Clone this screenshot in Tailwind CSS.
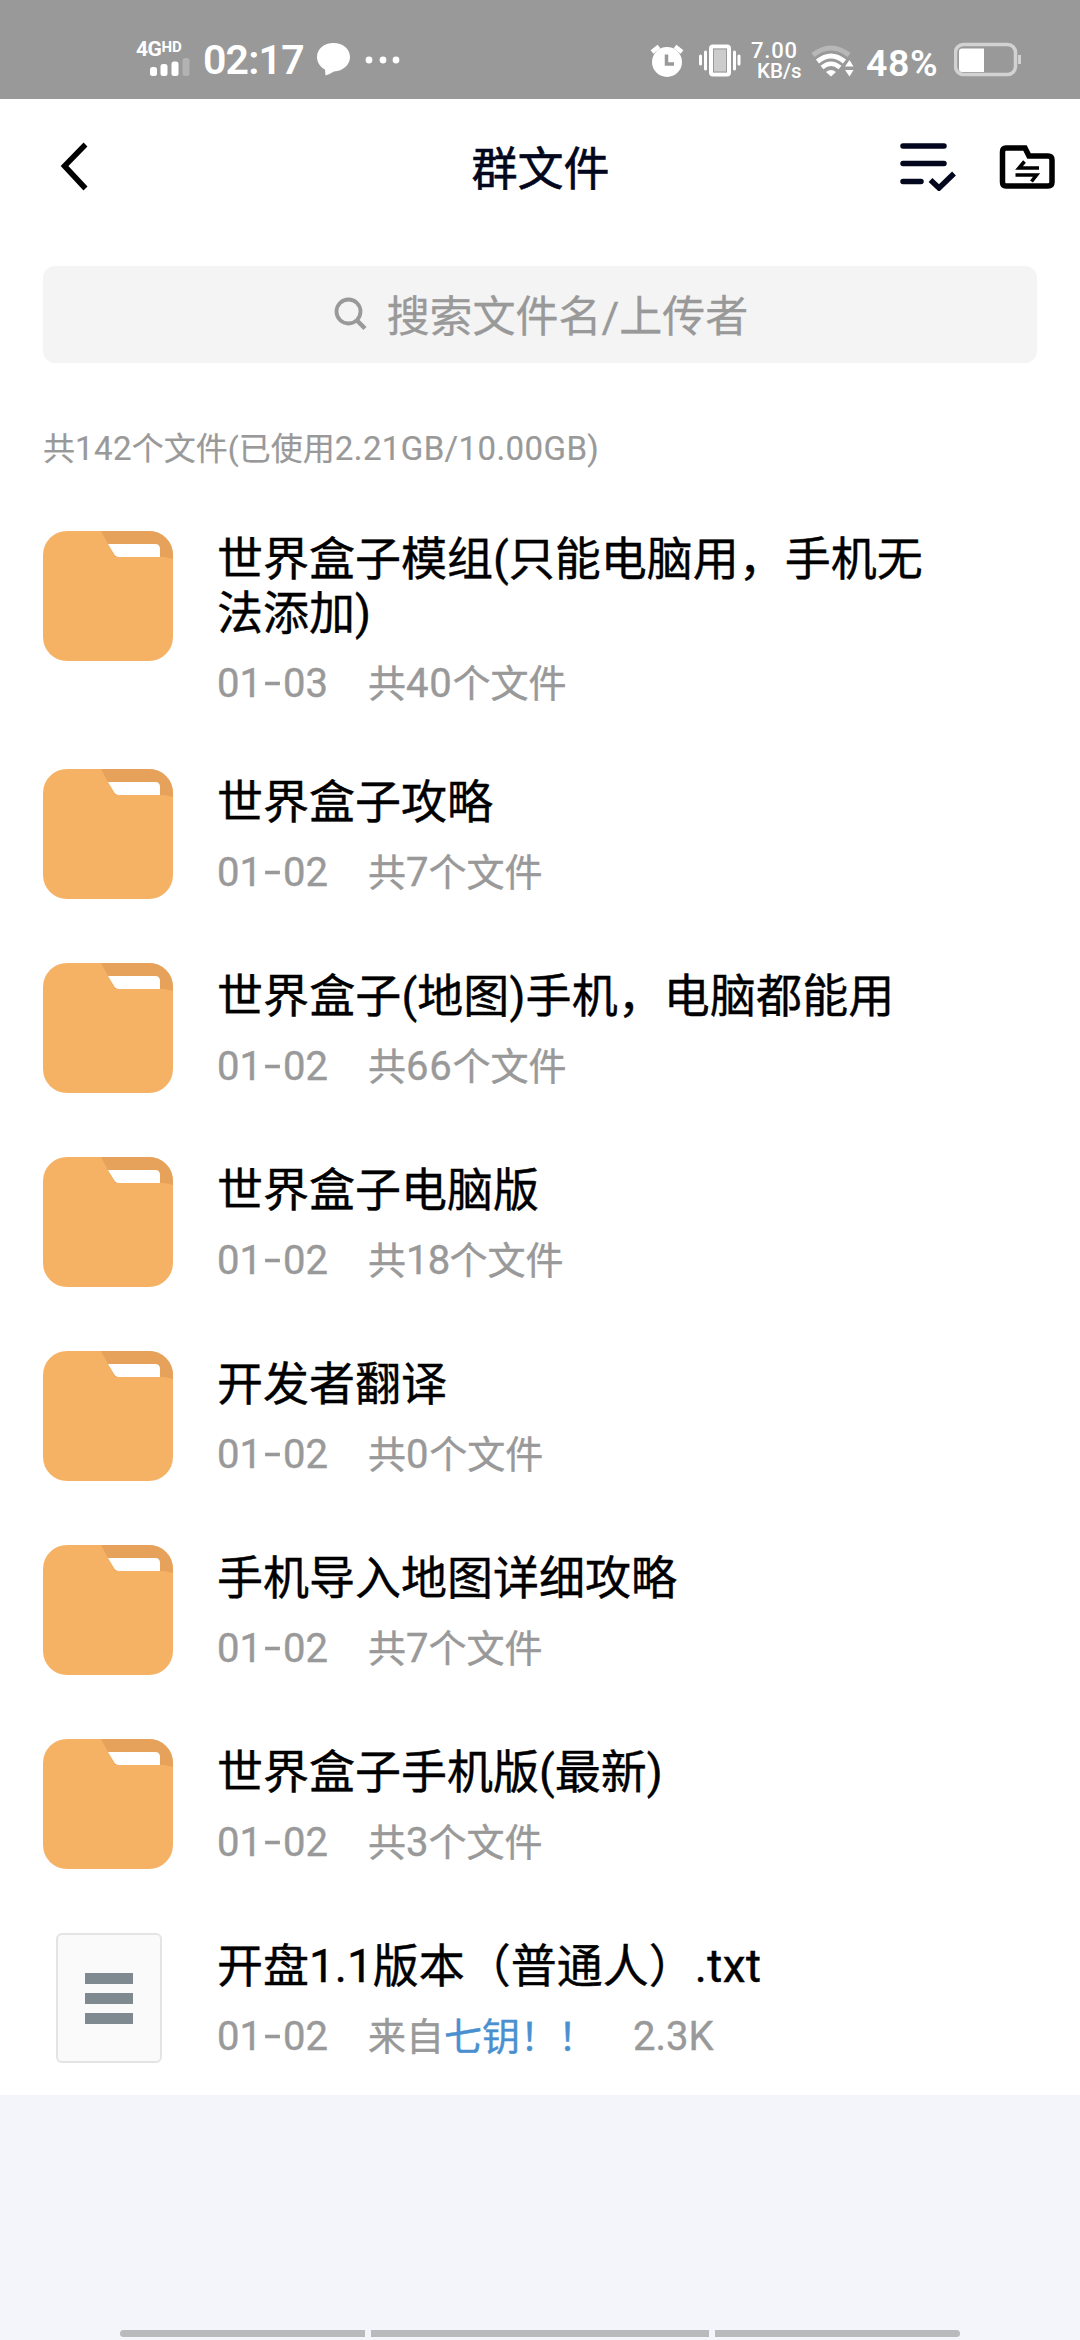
<!DOCTYPE html>
<html lang="zh-CN">
<head>
<meta charset="utf-8">
<title>群文件</title>
<script src="https://cdn.jsdelivr.net/npm/@tailwindcss/browser@4"></script>
</head>
<body class="w-[1080px] h-[2340px] overflow-hidden bg-[#f4f5fa] font-[Roboto,'Noto_Sans_CJK_SC',sans-serif] text-black flex flex-col">
<svg class="hidden">
  <symbol id="folder" viewBox="0 0 130 130">
    <rect width="130" height="130" rx="24" fill="#f6b264"/>
    <path d="M58 0H106A24 24 0 0 1 130 24V28L122 26H72Z" fill="#e6a25a"/>
    <path d="M65 13H112Q117 13 117 18V26H76Q72.500 26 71 23Z" fill="#fff"/>
  </symbol>
</svg>

<header class="h-[99px] shrink-0 bg-[#999] text-white flex items-start pl-[136px] font-medium">
  <div class="w-[54px] mt-[41px]">
    <div class="flex items-start font-bold leading-none h-[17px]"><span class="text-[21px] leading-[17px] tracking-[-0.5px]">4G</span><span class="text-[15px] leading-[12px]">HD</span></div>
    <svg class="ml-[14px] -mt-px block" width="40" height="20" viewBox="0 0 40 20" fill="#fff"><rect y="10" width="7" height="9" rx="2.500"/><rect x="10.500" y="7" width="7" height="12" rx="2.500"/><rect x="21.500" y="4.500" width="7" height="14.500" rx="2.500"/><rect x="32.500" y="1" width="7" height="18" rx="2.500" opacity=".25"/></svg>
  </div>
  <div class="ml-[13px] mt-[39px] w-[102px] text-[41px] leading-[42px] tracking-[-0.8px] font-semibold whitespace-nowrap">02:17</div>
  <svg class="ml-[11px] mt-[42px]" width="36" height="34" viewBox="0 0 36 34" fill="#fff"><path d="M17.500 1C27 1 34 7 34 15S27 29 18 29.500Q15 31.500 9.500 33.500L9 27.500C4 25 1 20 1 15 1 7 8 1 17.500 1Z"/></svg>
  <svg class="ml-[13px] mt-[56px]" width="36" height="8" viewBox="0 0 36 8" fill="#fff"><circle cx="4" cy="4" r="3.400"/><circle cx="18" cy="4" r="3.400"/><circle cx="31" cy="4" r="3.400"/></svg>
  <svg class="ml-[249px] mt-[44px]" width="34" height="34" viewBox="0 0 34 34"><circle cx="17" cy="18" r="15" fill="#fff"/><path d="M2 8L9 2.500M32 8L25 2.500" stroke="#fff" stroke-width="4.500"/><path d="M16.500 10.500V20H24" fill="none" stroke="#999" stroke-width="3.500"/></svg>
  <svg class="ml-[15px] mt-[44px]" width="42" height="34" viewBox="0 0 42 34"><rect x="12" y="2.500" width="18" height="28" rx="2" fill="#ccc" stroke="#fff" stroke-width="4"/><rect x="14.500" y="5" width="13" height="23" fill="#ccc" stroke="#999"/><path d="M1.500 12V20M6.500 8V25M35.500 8V25M40 12V20" stroke="#fff" stroke-width="3" stroke-linecap="round"/></svg>
  <div class="ml-[10px] mt-[41px] w-[52px] whitespace-nowrap">
    <div class="leading-[20px] text-[22px] tracking-[0.800px]">7.00</div><div class="leading-[20px] pl-[6px] text-[20.500px]">KB/s</div>
  </div>
  <svg class="ml-[8px] mt-[44px]" width="44" height="34" viewBox="0 0 44 34" fill="none" stroke="#fff"><path d="M2 11Q20 -3 38 11" stroke-width="5" opacity=".3"/><path d="M6.500 17.500Q20 6.500 33.500 17.500" stroke-width="5"/><path d="M11 23.500Q20 16 29 23.500" stroke-width="4.500"/><path d="M15 28Q20 24 25 28L20 32.500Z" fill="#fff" stroke="none"/><path d="M34 22.500L38.500 16L42.500 22.500ZM34 26L38.500 32.500L42.500 26Z" fill="#fff" stroke="none"/></svg>
  <div class="ml-[11px] mt-[45px] w-[76px] text-[37.500px] leading-[36px] tracking-[0.600px] font-semibold whitespace-nowrap">48%</div>
  <svg class="ml-[12px] mt-[42px]" width="68" height="35" viewBox="0 0 68 35"><rect x="1.500" y="2.500" width="60" height="30" rx="8" fill="none" stroke="#d2d2d2" stroke-width="3.500"/><path d="M8 6.500H30V30H8Q5 30 5 27V9.500Q5 6.500 8 6.500Z" fill="#fff"/><path d="M65.500 13V22" stroke="#d2d2d2" stroke-width="3"/></svg>
</header>

<main class="h-[1996px] shrink-0 bg-white">
  <nav class="h-[138px] grid grid-cols-3 items-center pl-[58px] pr-[22px]">
    <svg class="-mt-[2px]" width="34" height="52" viewBox="0 0 34 52" fill="none" stroke="#000" stroke-width="5.500"><path d="M27.500 3.500L6.500 25L27.500 47.500"/></svg>
    <h1 class="justify-self-center -ml-[35px] mt-px w-[138px] text-[46px] [-webkit-text-stroke:0.6px_#03071d] leading-[60px] whitespace-nowrap text-[#03071d]">群文件</h1>
    <div class="flex justify-end gap-[40px] items-center -mt-[5px]">
      <svg width="58" height="50" viewBox="0 0 58 50" fill="none" stroke="#03071d"><path d="M3 5H44M3 22.500H44M3 40.500H21" stroke-width="5.500" stroke-linecap="round"/><path d="M30.500 39L39 47L54 32.500" stroke-width="5.500"/></svg>
      <svg width="60" height="50" viewBox="0 0 60 50" fill="none" stroke="#000" stroke-width="5.500"><path d="M8 7H27L31 15H50Q54 15 54 19V41Q54 45 50 45H8Q4.500 45 4.500 41V11Q4.500 7 8 7Z"/><path d="M41 27H21L26.500 20.500M17.500 34H38.500L33.500 40.500" stroke-width="3.600"/></svg>
    </div>
  </nav>
  <div class="mx-[43px] mt-[29px] h-[97px] rounded-[12px] bg-[#f4f4f4] flex items-center justify-center text-[#999]">
    <svg class="mr-[20px] ml-[2px] -mt-px" width="33" height="34" viewBox="0 0 33 34" fill="none" stroke="#999" stroke-width="3.800"><circle cx="14.500" cy="14.500" r="12"/><path d="M23 23.500L31 31.500" stroke-width="4.500"/></svg>
    <span class="pt-[5px] text-[43px] leading-[60px] whitespace-nowrap [-webkit-text-stroke:0.3px]">搜索文件名/上传者</span>
  </div>
  <p class="mt-[61px] h-[50px] pl-[43px] text-[32px] leading-[50px] text-[#999] whitespace-nowrap [-webkit-text-stroke:0.2px]">共<span class="text-[33px] tracking-[0.400px]">142</span>个文件(已使用<span class="text-[33px] tracking-[0.400px]">2.21GB/10.00GB)</span></p>

  <ul class="mt-[25px] [-webkit-text-stroke:0.4px]">
    <li class="flex h-[238px] pl-[43px] pt-[32px]">
      <svg class="w-[130px] h-[130px] shrink-0"><use href="#folder"/></svg>
      <div class="ml-[44px] pt-px">
        <h2 class="w-[716px] text-[46px] leading-[54px]">世界盒子模组(只能电脑用，手机无法添加)</h2>
        <p class="mt-[18px] flex text-[38px] leading-[52px] text-[#999] whitespace-nowrap"><span class="w-[151px] text-[40px]">01<span class="inline-block scale-x-150 mx-[5px] -translate-y-px">-</span>03</span><span>共<span class="text-[40px] tracking-[0.800px]">40</span>个文件</span></p>
      </div>
    </li>
    <li class="flex h-[194px] pl-[43px] pt-[32px]">
      <svg class="w-[130px] h-[130px] shrink-0"><use href="#folder"/></svg>
      <div class="ml-[44px] pt-[6px]">
        <h2 class="text-[46px] leading-[54px]">世界盒子攻略</h2>
        <p class="mt-[18px] flex text-[38px] leading-[52px] text-[#999] whitespace-nowrap"><span class="w-[151px] text-[40px]">01<span class="inline-block scale-x-150 mx-[5px] -translate-y-px">-</span>02</span><span>共<span class="text-[40px]">7</span>个文件</span></p>
      </div>
    </li>
    <li class="flex h-[194px] pl-[43px] pt-[32px]">
      <svg class="w-[130px] h-[130px] shrink-0"><use href="#folder"/></svg>
      <div class="ml-[44px] pt-[6px]">
        <h2 class="text-[46px] leading-[54px] tracking-[0.100px]">世界盒子(地图)手机，电脑都能用</h2>
        <p class="mt-[18px] flex text-[38px] leading-[52px] text-[#999] whitespace-nowrap"><span class="w-[151px] text-[40px]">01<span class="inline-block scale-x-150 mx-[5px] -translate-y-px">-</span>02</span><span>共<span class="text-[40px] tracking-[0.800px]">66</span>个文件</span></p>
      </div>
    </li>
    <li class="flex h-[194px] pl-[43px] pt-[32px]">
      <svg class="w-[130px] h-[130px] shrink-0"><use href="#folder"/></svg>
      <div class="ml-[44px] pt-[6px]">
        <h2 class="text-[46px] leading-[54px]">世界盒子电脑版</h2>
        <p class="mt-[18px] flex text-[38px] leading-[52px] text-[#999] whitespace-nowrap"><span class="w-[151px] text-[40px]">01<span class="inline-block scale-x-150 mx-[5px] -translate-y-px">-</span>02</span><span>共<span class="text-[40px] tracking-[-0.800px]">18</span>个文件</span></p>
      </div>
    </li>
    <li class="flex h-[194px] pl-[43px] pt-[32px]">
      <svg class="w-[130px] h-[130px] shrink-0"><use href="#folder"/></svg>
      <div class="ml-[44px] pt-[6px]">
        <h2 class="text-[46px] leading-[54px]">开发者翻译</h2>
        <p class="mt-[18px] flex text-[38px] leading-[52px] text-[#999] whitespace-nowrap"><span class="w-[151px] text-[40px]">01<span class="inline-block scale-x-150 mx-[5px] -translate-y-px">-</span>02</span><span>共<span class="text-[40px] tracking-[0.800px]">0</span>个文件</span></p>
      </div>
    </li>
    <li class="flex h-[194px] pl-[43px] pt-[32px]">
      <svg class="w-[130px] h-[130px] shrink-0"><use href="#folder"/></svg>
      <div class="ml-[44px] pt-[6px]">
        <h2 class="text-[46px] leading-[54px]">手机导入地图详细攻略</h2>
        <p class="mt-[18px] flex text-[38px] leading-[52px] text-[#999] whitespace-nowrap"><span class="w-[151px] text-[40px]">01<span class="inline-block scale-x-150 mx-[5px] -translate-y-px">-</span>02</span><span>共<span class="text-[40px]">7</span>个文件</span></p>
      </div>
    </li>
    <li class="flex h-[194px] pl-[43px] pt-[32px]">
      <svg class="w-[130px] h-[130px] shrink-0"><use href="#folder"/></svg>
      <div class="ml-[44px] pt-[6px]">
        <h2 class="text-[46px] leading-[54px]">世界盒子手机版(最新)</h2>
        <p class="mt-[18px] flex text-[38px] leading-[52px] text-[#999] whitespace-nowrap"><span class="w-[151px] text-[40px]">01<span class="inline-block scale-x-150 mx-[5px] -translate-y-px">-</span>02</span><span>共<span class="text-[40px]">3</span>个文件</span></p>
      </div>
    </li>
    <li class="flex h-[194px] pl-[43px] pt-[32px]">
      <div class="ml-[13px] mr-[11px] w-[106px] h-[130px] shrink-0 rounded-[6px] border-2 border-[#e4e4e4] bg-[#fafafa] flex flex-col items-center pt-[38px] gap-[9px]">
        <i class="w-[48px] h-[11px] bg-[#7f8a90]"></i><i class="w-[48px] h-[11px] bg-[#7f8a90]"></i><i class="w-[48px] h-[11px] bg-[#7f8a90]"></i>
      </div>
      <div class="ml-[44px] pt-[6px]">
        <h2 class="text-[46px] leading-[54px] whitespace-nowrap">开盘1.1版本（普通人）<span class="tracking-[0.400px]">.txt</span></h2>
        <p class="mt-[18px] flex text-[38px] leading-[52px] text-[#999] whitespace-nowrap"><span class="w-[151px] text-[40px]">01<span class="inline-block scale-x-150 mx-[5px] -translate-y-px">-</span>02</span>来自<span class="text-[#4a90d0]">七钥！！</span><span class="ml-[37px] text-[40px]">2.3K</span></p>
      </div>
    </li>
  </ul>
</main>

<footer class="mt-[235px] flex justify-center gap-[6px]">
  <i class="w-[245px] h-[7px] rounded-l-full bg-[#b9babc]"></i><i class="w-[338px] h-[7px] bg-[#b9babc]"></i><i class="w-[245px] h-[7px] rounded-r-full bg-[#b9babc]"></i>
</footer>
</body>
</html>
